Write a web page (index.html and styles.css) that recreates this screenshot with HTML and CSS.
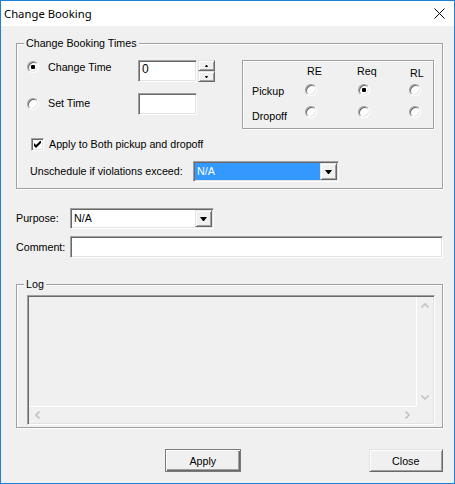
FILE: index.html
```html
<!DOCTYPE html>
<html>
<head>
<meta charset="utf-8">
<link rel="stylesheet" href="styles.css">
</head>
<body>
<div class="window">
  <div class="titlebar">
    <span class="title">Change Booking</span>
    <svg class="close" width="11" height="11" viewBox="0 0 11 11"><path d="M0.5 0.5 L10.5 10.5 M10.5 0.5 L0.5 10.5" stroke="#000" stroke-width="1" fill="none"/></svg>
  </div>
  <div class="content">
    <div class="group g1">
      <div class="legend">Change Booking Times</div>
      <div class="toprow">
        <div class="timegrid">
          <span class="radio on r1"></span>
          <span class="tlabel t1">Change Time</span>
          <span class="edit tedit">0</span>
          <span class="spin"><span class="sbtn up"></span><span class="sbtn down"></span></span>
          <span class="radio r2"></span>
          <span class="tlabel t2">Set Time</span>
          <span class="edit tedit"></span>
        </div>
        <div class="pbox">
          <span></span>
          <span class="hd hre">RE</span>
          <span class="hd hreq">Req</span>
          <span class="hd hrl">RL</span>
          <span class="plbl pk">Pickup</span>
          <span class="radio pr"></span>
          <span class="radio pr mid on"></span>
          <span class="radio pr"></span>
          <span class="plbl dr">Dropoff</span>
          <span class="radio pr"></span>
          <span class="radio pr mid"></span>
          <span class="radio pr"></span>
        </div>
      </div>
      <div class="checkrow">
        <span class="check"><svg width="7" height="7" viewBox="0 0 7 7"><path d="M0 2 L2 4 L6 0 L7 0 L7 2 L2 7 L0 5 Z" fill="#000"/></svg></span>
        <span class="clabel">Apply to Both pickup and dropoff</span>
      </div>
      <div class="unsched">
        <span class="ulabel">Unschedule if violations exceed:</span>
        <div class="combo ucombo"><span class="ctext sel">N/A</span><span class="dd"></span></div>
      </div>
    </div>

    <div class="formrow purpose">
      <span class="flabel">Purpose:</span>
      <div class="combo pcombo"><span class="ctext">N/A</span><span class="dd"></span></div>
    </div>
    <div class="formrow comment">
      <span class="flabel">Comment:</span>
      <span class="edit cedit"></span>
    </div>

    <div class="group g2">
      <div class="legend">Log</div>
      <div class="listbox">
        <div class="lbody"></div>
        <div class="vscroll">
          <span class="sarrow"><svg width="8" height="5" viewBox="0 0 8 5"><path d="M0.5 4.5 L4 1 L7.5 4.5" stroke="#c3c3c3" stroke-width="1.6" fill="none"/></svg></span>
          <span class="sarrow"><svg width="8" height="5" viewBox="0 0 8 5"><path d="M0.5 0.5 L4 4 L7.5 0.5" stroke="#c3c3c3" stroke-width="1.6" fill="none"/></svg></span>
        </div>
        <div class="hscroll">
          <span class="sarrow"><svg width="5" height="8" viewBox="0 0 5 8"><path d="M4.5 0.5 L1 4 L4.5 7.5" stroke="#c3c3c3" stroke-width="1.6" fill="none"/></svg></span>
          <span class="sarrow"><svg width="5" height="8" viewBox="0 0 5 8"><path d="M0.5 0.5 L4 4 L0.5 7.5" stroke="#c3c3c3" stroke-width="1.6" fill="none"/></svg></span>
        </div>
        <div class="corner"></div>
      </div>
    </div>

    <div class="buttons">
      <button class="btn default">Apply</button>
      <button class="btn closebtn">Close</button>
    </div>
  </div>
</div>
</body>
</html>
```

FILE: styles.css
```css
body {
  margin: 0;
  background: #ffffff;
}
.window {
  width: 455px;
  height: 484px;
  box-sizing: border-box;
  border: 1px solid #1a80d8;
  background: #f0f0f0;
  font-family: "Liberation Sans", Arial, sans-serif;
  font-size: 10.7px;
  line-height: 13px;
  color: #000;
  display: flex;
  flex-direction: column;
  overflow: hidden;
}
.titlebar {
  height: 25px;
  flex: none;
  background: #ffffff;
  display: flex;
  align-items: center;
  justify-content: space-between;
  padding-left: 3px;
}
.title {
  font-family: "Noto Sans", sans-serif;
  font-size: 11.3px;
  line-height: 16px;
}
.close {
  margin-right: 9px;
}
.content {
  padding: 17px 11px 0 15px;
}
.group {
  border: 1px solid #a0a0a0;
  box-shadow: inset 1px 1px 0 #ffffff, 1px 1px 0 #ffffff;
  width: 427px;
  box-sizing: border-box;
}
.legend {
  width: max-content;
  margin: -7px 0 0 7px;
  padding: 0 2px;
  background: #f0f0f0;
  line-height: 13px;
}
.g1 {
  padding-bottom: 6px;
}
.toprow {
  display: flex;
  align-items: flex-start;
  margin-top: 10px;
}
.timegrid {
  margin-left: 10px;
  display: grid;
  grid-template-columns: 21px 90px 60px 17px;
  grid-template-rows: 22px 22px;
  row-gap: 11px;
  align-items: start;
}
.radio {
  display: block;
  width: 12px;
  height: 12px;
  box-sizing: border-box;
  border-radius: 50%;
  background: #ffffff;
  border: 1px solid;
  border-color: #a0a0a0 #ffffff #ffffff #a0a0a0;
  box-shadow: inset 1px 1px 0 #696969, inset -1px -1px 0 #e3e3e3;
}
.radio.on::after {
  content: "";
  display: block;
  width: 4px;
  height: 4px;
  margin: 3px;
  background: #000;
  border-radius: 1px;
}
.r1 { margin-top: 1px; }
.t1 { margin-top: 1px; }
.r2 { margin-top: 5px; }
.t2 { margin-top: 4px; }
.edit {
  display: block;
  box-sizing: border-box;
  background: #ffffff;
  border: 1px solid;
  border-color: #a0a0a0 #ffffff #ffffff #a0a0a0;
  box-shadow: inset 1px 1px 0 #696969, inset -1px -1px 0 #e3e3e3;
  padding: 2px 0 0 3px;
}
.tedit {
  width: 59px;
  height: 22px;
  font-size: 12px;
}
.spin {
  display: flex;
  flex-direction: column;
  width: 17px;
  height: 22px;
}
.sbtn,
.dd {
  display: flex;
  align-items: center;
  justify-content: center;
  box-sizing: border-box;
  background: #f0f0f0;
  border: 1px solid;
  border-color: #e3e3e3 #696969 #696969 #e3e3e3;
  box-shadow: inset 1px 1px 0 #ffffff, inset -1px -1px 0 #a0a0a0;
}
.sbtn {
  height: 11px;
}
.sbtn::after {
  content: "";
  width: 1px;
  height: 0;
  border-left: 1px solid transparent;
  border-right: 1px solid transparent;
}
.sbtn.up::after {
  border-bottom: 2px solid #000;
}
.sbtn.down::after {
  border-top: 2px solid #000;
}
.pbox {
  margin-left: 27px;
  width: 192px;
  height: 69px;
  box-sizing: border-box;
  border: 1px solid #a0a0a0;
  box-shadow: inset 1px 1px 0 #ffffff, 1px 1px 0 #ffffff;
  display: grid;
  grid-template-columns: 62px 52px 52px 1fr;
  grid-template-rows: 18px 22px 26px;
  align-items: start;
}
.hd { padding-top: 4px; }
.hre { padding-left: 2px; }
.hreq { padding-left: 0; }
.hrl { padding-left: 1px; padding-top: 6px; }
.plbl { padding-left: 9px; }
.pk { margin-top: 6px; }
.dr { margin-top: 9px; }
.pr { margin-top: 5px; }
.pr.mid { margin-left: 1px; }
.checkrow {
  display: flex;
  align-items: center;
  height: 13px;
  margin: 9px 0 0 14px;
}
.check {
  width: 13px;
  height: 13px;
  box-sizing: border-box;
  background: #ffffff;
  border: 1px solid;
  border-color: #a0a0a0 #ffffff #ffffff #a0a0a0;
  box-shadow: inset 1px 1px 0 #696969, inset -1px -1px 0 #e3e3e3;
  display: flex;
  align-items: center;
  justify-content: center;
}
.clabel {
  margin-left: 5px;
}
.unsched {
  display: flex;
  align-items: center;
  margin: 10px 0 0 13px;
}
.ulabel {
  width: 163px;
  flex: none;
}
.combo {
  display: flex;
  box-sizing: border-box;
  height: 21px;
  padding: 1px;
  background: #ffffff;
  border: 1px solid;
  border-color: #a0a0a0 #ffffff #ffffff #a0a0a0;
  box-shadow: inset 1px 1px 0 #696969, inset -1px -1px 0 #e3e3e3;
}
.ctext {
  flex: 1;
  line-height: 17px;
  padding-left: 2px;
}
.ctext.sel {
  background: #3399ff;
  color: #ffffff;
}
.dd {
  width: 17px;
  height: 17px;
  flex: none;
}
.dd::after {
  content: "";
  width: 1px;
  height: 0;
  border-top: 4px solid #000;
  border-left: 3px solid transparent;
  border-right: 3px solid transparent;
  margin-top: 1px;
}
.ucombo {
  width: 146px;
}
.formrow {
  display: flex;
  align-items: center;
}
.flabel {
  width: 54px;
  flex: none;
}
.purpose {
  margin-top: 19px;
}
.pcombo {
  width: 144px;
}
.comment {
  margin-top: 7px;
}
.cedit {
  width: 374px;
  height: 22px;
}
.g2 {
  margin-top: 26px;
  height: 144px;
}
.listbox {
  margin: 4px 7px 0 10px;
  height: 130px;
  box-sizing: border-box;
  border: 1px solid;
  border-color: #a0a0a0 #ffffff #ffffff #a0a0a0;
  box-shadow: inset 1px 1px 0 #696969, inset -1px -1px 0 #e3e3e3;
  padding: 1px;
  display: grid;
  grid-template-columns: 1fr 17px;
  grid-template-rows: 1fr 17px;
}
.vscroll {
  border-left: 1px solid #ffffff;
  display: flex;
  flex-direction: column;
  justify-content: space-between;
}
.hscroll {
  border-top: 1px solid #ffffff;
  display: flex;
  justify-content: space-between;
}
.sarrow {
  width: 17px;
  height: 17px;
  display: flex;
  align-items: center;
  justify-content: center;
}
.vscroll .sarrow {
  width: 16px;
}
.hscroll .sarrow {
  height: 16px;
}
.buttons {
  display: flex;
  margin-top: 21px;
}
.btn {
  font-family: "Liberation Sans", Arial, sans-serif;
  font-size: 10.7px;
  color: #000;
  height: 23px;
  padding: 0;
  background: #f0f0f0;
  border: 1px solid;
  border-color: #e3e3e3 #696969 #696969 #e3e3e3;
  box-shadow: inset 1px 1px 0 #ffffff, inset -1px -1px 0 #a0a0a0;
}
.default {
  width: 76px;
  margin-left: 149px;
  border-color: #7a7a7a;
  box-shadow: inset 1px 1px 0 #ffffff, inset -1px -1px 0 #696969, inset -2px -2px 0 #a0a0a0;
}
.closebtn {
  width: 75px;
  margin-left: 128px;
}
```
